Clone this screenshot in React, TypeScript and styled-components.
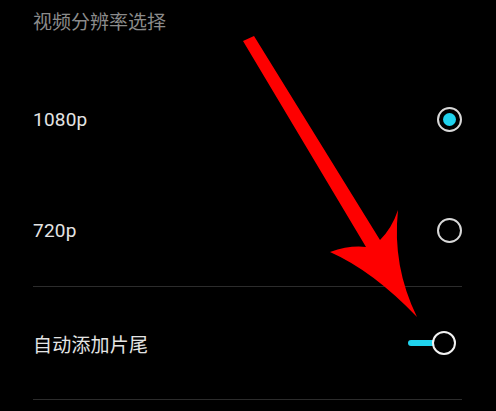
import React, { FC, ReactNode } from 'react';
import styled, { createGlobalStyle } from 'styled-components';

const ACCENT = '#20d3ee';

const GlobalStyle = createGlobalStyle`
  html, body {
    margin: 0;
    padding: 0;
    background: #000;
  }

  body {
    width: 496px;
    height: 411px;
    overflow: hidden;
    font-family: Roboto, 'Noto Sans CJK SC', sans-serif;
  }
`;

const Screen = styled.div`
  position: relative;
  width: 496px;
  height: 411px;
  padding: 0 34px 0 33px;
  box-sizing: border-box;
  background: #000;
`;

const Title = styled.div`
  height: 64px;
  padding-top: 6px;
  box-sizing: border-box;
  line-height: 34px;
  font-size: 19px;
  color: #8b8b8b;
`;

const Row = styled.div<{ $h: number }>`
  display: flex;
  align-items: center;
  justify-content: space-between;
  height: ${({ $h }) => $h}px;
`;

const Label = styled.span`
  font-size: 19px;
  color: #e4e4e4;
  letter-spacing: 0.2px;
`;

const Divider = styled.div`
  height: 1px;
  background: #2c2c2c;
`;

const Radio = styled.span<{ $checked?: boolean }>`
  display: flex;
  align-items: center;
  justify-content: center;
  width: 25px;
  height: 25px;
  box-sizing: border-box;
  border: 2px solid #d8d8d8;
  border-radius: 50%;

  &::after {
    content: '';
    width: 13px;
    height: 13px;
    border-radius: 50%;
    background: ${({ $checked }) => ($checked ? ACCENT : 'transparent')};
  }
`;

const Toggle = styled.span`
  position: relative;
  display: flex;
  align-items: center;
  width: 48px;
  height: 24px;
  margin-right: 6px;

  .toggle-track {
    width: 34px;
    height: 6px;
    border-radius: 3px;
    background: ${ACCENT};
  }

  .toggle-knob {
    position: absolute;
    right: 0;
    top: 0;
    width: 24px;
    height: 24px;
    box-sizing: border-box;
    border: 2px solid #f2f2f2;
    border-radius: 50%;
    background: #000;
  }
`;

const ArrowOverlay = styled.svg`
  position: absolute;
  left: 0;
  top: 0;
  width: 496px;
  height: 411px;
  pointer-events: none;
`;

const SettingRow: FC<{ label: string; height: number; children: ReactNode }> = ({ label, height, children }) => (
  <Row $h={height}>
    <Label>{label}</Label>
    {children}
  </Row>
);

const App: FC = () => (
  <>
    <GlobalStyle />
    <Screen>
      <Title>视频分辨率选择</Title>

      <SettingRow label='1080p' height={111}>
        <Radio $checked />
      </SettingRow>

      <SettingRow label='720p' height={111}>
        <Radio />
      </SettingRow>

      <Divider />

      <SettingRow label='自动添加片尾' height={112}>
        <Toggle>
          <span className='toggle-track' />
          <span className='toggle-knob' />
        </Toggle>
      </SettingRow>

      <Divider />

      {/* red annotation arrow drawn over the screenshot */}
      <ArrowOverlay viewBox='0 0 496 411'>
        <path
          fill='#fe0000'
          d='M243 41 L254 36 L380 240 Q392 228 398 210 Q392 266 417 317 Q373 271 330 252 Q350 245 366 247 Z'
        />
      </ArrowOverlay>
    </Screen>
  </>
);

export default App;
